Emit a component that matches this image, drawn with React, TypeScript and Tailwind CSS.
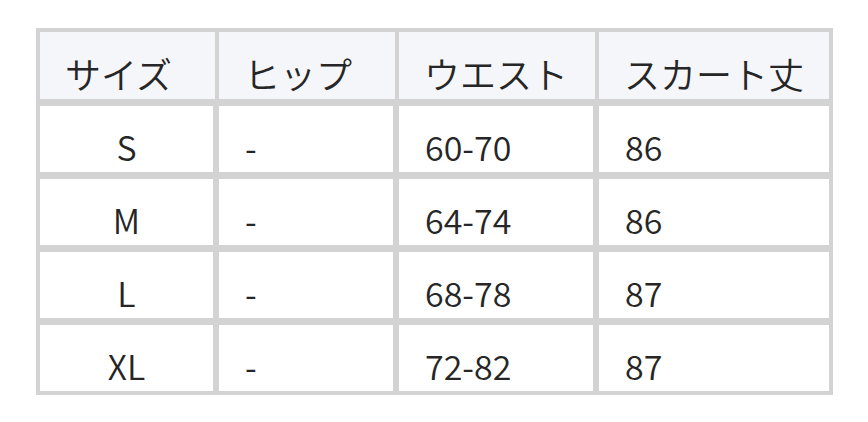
import React from 'react';

interface SizeRow {
  size: string;
  hip: string;
  waist: string;
  length: string;
}

const headers = ['サイズ', 'ヒップ', 'ウエスト', 'スカート丈'];

const rows: SizeRow[] = [
  { size: 'S', hip: '-', waist: '60-70', length: '86' },
  { size: 'M', hip: '-', waist: '64-74', length: '86' },
  { size: 'L', hip: '-', waist: '68-78', length: '87' },
  { size: 'XL', hip: '-', waist: '72-82', length: '87' },
];

const cols = 'grid grid-cols-[175px_176px_196px_230px] gap-x-[4px]';

const App: React.FC = () => {
  return (
    <div
      className="min-h-screen bg-white pt-[28px] pl-[36px]"
      style={{ fontFamily: '"Noto Sans CJK JP", "Noto Sans", sans-serif' }}
    >
      <div className="w-[797px] bg-[#d3d3d3] p-[4px] flex flex-col gap-y-[7px] font-[350] text-[#262626]">
        <div className={cols}>
          {headers.map((h) => (
            <div
              key={h}
              className="bg-[#f5f6fa] h-[67px] pt-[23px] pl-[25px] whitespace-nowrap text-[36px] leading-[36px]"
            >
              {h}
            </div>
          ))}
        </div>

        {rows.map((r) => (
          <div key={r.size} className={`${cols} text-[34px] leading-[34px]`}>
            <div className="bg-white h-[66px] pt-[24px] text-center border-r-2 border-[#d3d3d3]">
              {r.size}
            </div>
            <div className="bg-white h-[66px] pt-[24px] pl-[26px] border-r-2 border-[#d3d3d3]">
              {r.hip}
            </div>
            <div className="bg-white h-[66px] pt-[24px] pl-[26px] border-r-2 border-[#d3d3d3]">
              {r.waist}
            </div>
            <div className="bg-white h-[66px] pt-[24px] pl-[26px]">{r.length}</div>
          </div>
        ))}
      </div>
    </div>
  );
};

export default App;
